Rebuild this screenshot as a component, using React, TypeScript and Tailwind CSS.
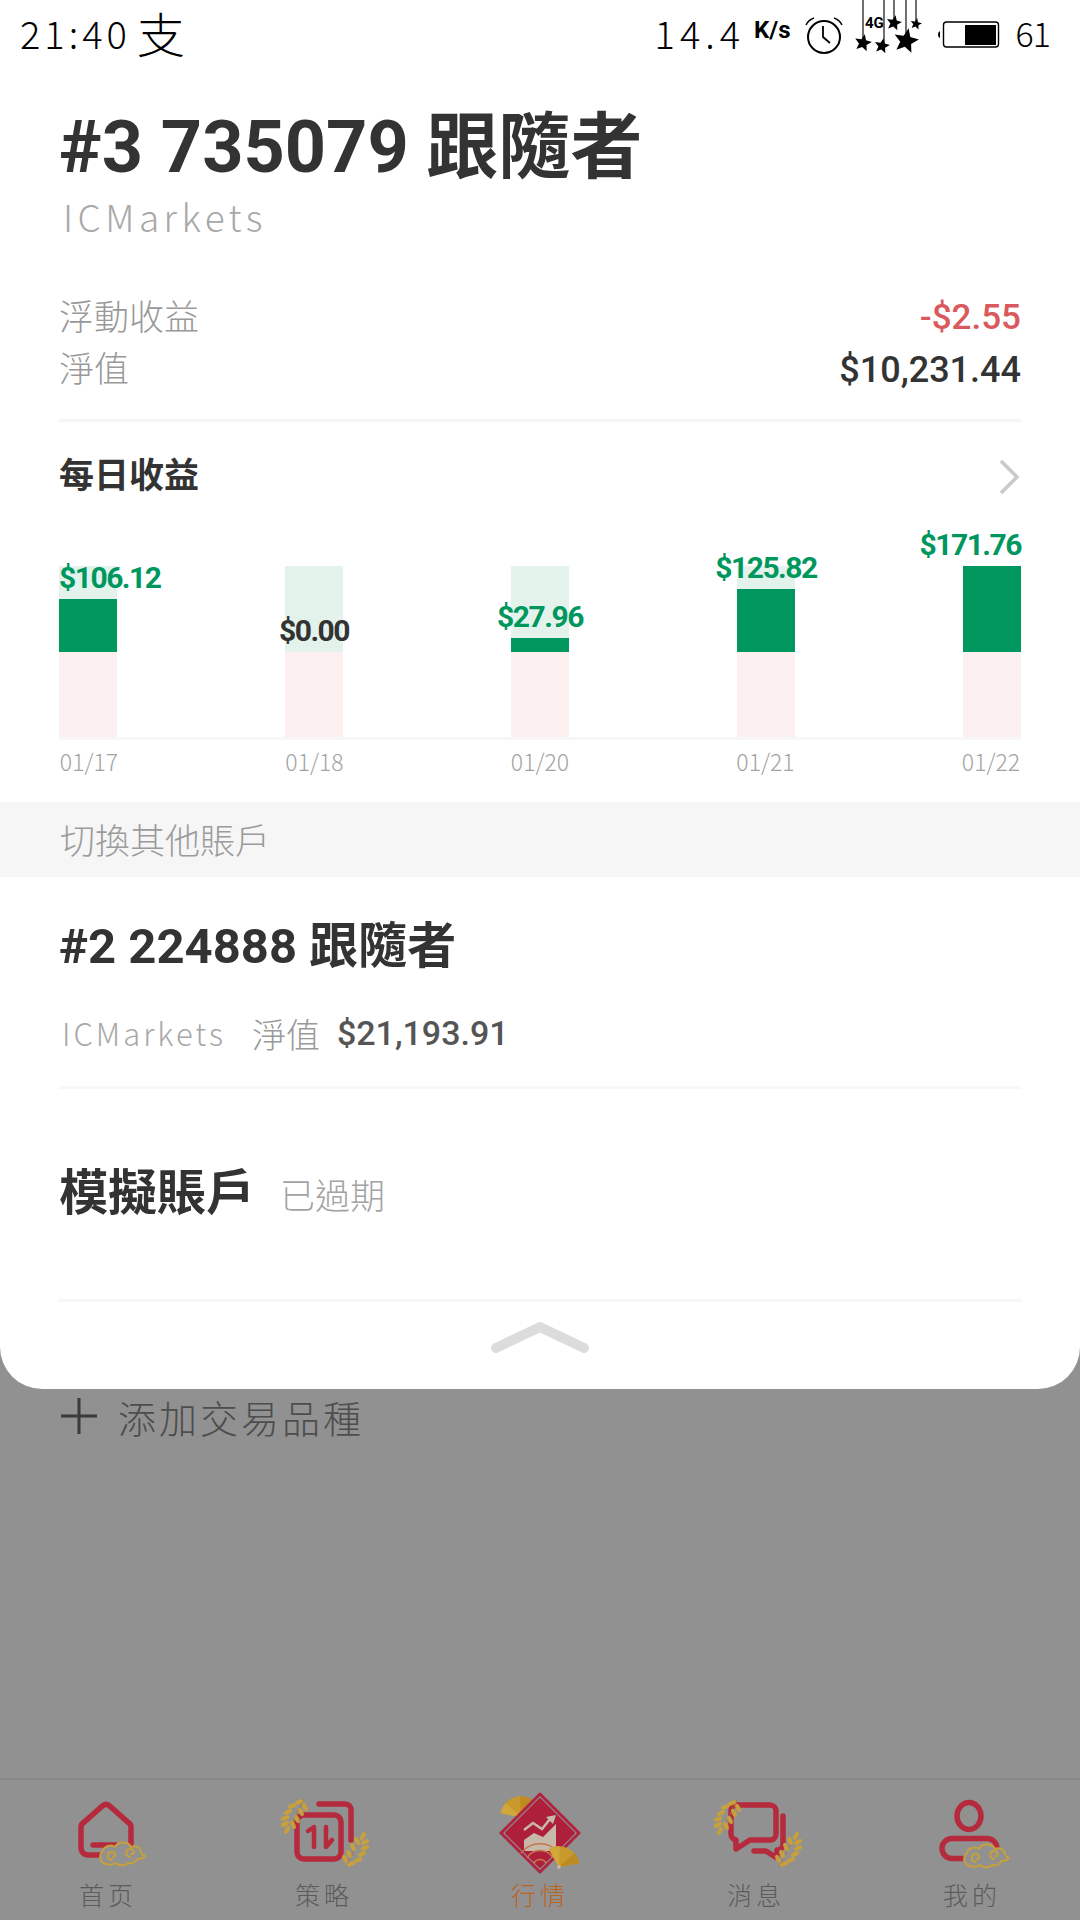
import React from "react";

const RED = "#b62a3d";
const GOLD = "#c6a03c";
const BG = "#919191";

function Cloud({ x, y }: { x: number; y: number }) {
  return (
    <g transform={`translate(${x} ${y})`} fill={BG} stroke={GOLD} strokeWidth="2" strokeLinecap="round" strokeLinejoin="round">
      <path d="M8 22 C1 22 -1 13 4 9 C5 4 12 2 16 5 C19 -1 29 -1 32 5 C36 3 41 5 42 10 C43 13 45 14 46 14 L44 16 C42 17 40 17 38 17 C37 21 32 22 29 21 C26 24 20 24 17 21 C14 23 11 23 8 22 Z" />
      <path fill="none" d="M13 18 C8 18 7 11 12 10 C16 9 18 15 14 15 M31 15 C26 14 26 7 31 7 C36 7 36 13 32 12" />
    </g>
  );
}

function Sprig({ x, y, flip }: { x: number; y: number; flip?: boolean }) {
  const grains: [number, number, number][] = [
    [15, 1, -20], [8, 5, -20], [21, 6, 65], [4, 11, -25], [17, 11, 65], [1, 17, -20], [13, 18, 65], [1, 23, -30], [9, 24, 65], [3, 29, -60],
  ];
  return (
    <g transform={`translate(${x} ${y})${flip ? " rotate(180 11 16)" : ""}`}>
      <path d="M20 -2 L7 24" stroke="#b06a3a" strokeWidth="0.8" />
      {grains.map(([gx, gy, r], i) => (
        <ellipse key={i} cx={gx} cy={gy} rx="4.500" ry="2.200" fill={GOLD} transform={`rotate(${r} ${gx} ${gy})`} />
      ))}
    </g>
  );
}

function HomeIcon() {
  return (
    <svg width="100" height="90" viewBox="0 0 100 90">
      <path d="M44 65 H30 A7 7 0 0 1 23 58 V37 A5 5 0 0 1 25 33 L45 15.500 A5 5 0 0 1 51 15.500 L71 33 A5 5 0 0 1 73 37 V56" fill="none" stroke={RED} strokeWidth="5.500" strokeLinecap="round" />
      <path d="M35 55 H58" stroke={RED} strokeWidth="5.500" strokeLinecap="round" />
      <Cloud x={41} y={52} />
    </svg>
  );
}

function StrategyIcon() {
  return (
    <svg width="100" height="90" viewBox="0 0 100 90">
      <path d="M45 14 H71 A6 6 0 0 1 77 20 V50" fill="none" stroke={RED} strokeWidth="5.500" strokeLinecap="round" />
      <rect x="23" y="25" width="44" height="44" rx="7" fill="none" stroke={RED} strokeWidth="5.500" />
      <path d="M34 41 L40 37 V57 M52 37 V57 L58 50" fill="none" stroke={RED} strokeWidth="4.500" strokeLinecap="round" strokeLinejoin="round" />
      <Sprig x={10} y={11} />
      <Sprig x={70} y={43} flip />
    </svg>
  );
}

function Fan({ x, y, r }: { x: number; y: number; r: number }) {
  return (
    <g transform={`translate(${x} ${y}) rotate(${r})`}>
      <path d="M0 0 L-17 -12 A21 21 0 0 1 17 -12 Z" fill="#c99a2b" />
      <path d="M0 0 L-17 -12 A21 21 0 0 1 -8 -19 Z" fill="#d2a73b" />
      <path d="M0 0 L8 -19 A21 21 0 0 1 17 -12 Z" fill="#bd8a24" />
      <circle r="1.800" fill="#c9b9a5" />
    </g>
  );
}

function MarketIcon() {
  return (
    <svg width="100" height="90" viewBox="0 0 100 90">
      <Fan x={31} y={27} r={-25} />
      <path d="M50 4 L89 43 L50 82 L11 43 Z" fill={BG} stroke="#b0233f" strokeWidth="3" strokeLinejoin="round" />
      <path d="M50 9 L84 43 L50 77 L16 43 Z" fill="#ae1f3b" stroke="#ae1f3b" strokeWidth="2" strokeLinejoin="round" />
      <path d="M34 50 L44 43 L53 47 L66 34 V59 A2 2 0 0 1 64 61 H36 A2 2 0 0 1 34 59 Z" fill="#c7b9aa" />
      <path d="M34 40 L43 33 L52 39 L60 29" fill="none" stroke="#c7b9aa" strokeWidth="2.500" />
      <path d="M56 27 L66 25 L63 34 Z" fill="#c7b9aa" />
      <path d="M31 63 A24 24 0 0 1 69 63 M37 68 A15 15 0 0 1 63 68 M44 73 A7 7 0 0 1 56 73" fill="none" stroke="#c9754a" strokeWidth="1.500" />
      <Fan x={69} y={77} r={25} />
    </svg>
  );
}

function MessageIcon() {
  return (
    <svg width="100" height="90" viewBox="0 0 100 90">
      <path d="M31 15 H64 A6 6 0 0 1 70 21 V44 A6 6 0 0 1 64 50 H44 L30 59 V50 A6 6 0 0 1 25 44 V21 A6 6 0 0 1 31 15 Z" fill="none" stroke={RED} strokeWidth="5.500" strokeLinejoin="round" />
      <path d="M77 26 V55 A6 6 0 0 1 71 60 V68 L60 61 H48" fill="none" stroke={RED} strokeWidth="5.500" strokeLinecap="round" strokeLinejoin="round" />
      <Sprig x={11} y={12} />
      <Sprig x={71} y={43} flip />
    </svg>
  );
}

function MeIcon() {
  return (
    <svg width="100" height="90" viewBox="0 0 100 90">
      <ellipse cx="47" cy="26" rx="12" ry="13.500" fill="none" stroke={RED} strokeWidth="5.500" />
      <rect x="20" y="48.500" width="55" height="20" rx="10" fill="none" stroke={RED} strokeWidth="5.500" />
      <Cloud x={41} y={54} />
    </svg>
  );
}

function star(cx: number, cy: number, r: number) {
  const pts: string[] = [];
  for (let i = 0; i < 10; i++) {
    const a = (Math.PI / 5) * i - Math.PI / 2 + 0.2;
    const rad = i % 2 ? r * 0.45 : r;
    pts.push(`${(cx + rad * Math.cos(a)).toFixed(1)},${(cy + rad * Math.sin(a)).toFixed(1)}`);
  }
  return pts.join(" ");
}

function Alarm() {
  return (
    <svg width="40" height="44" viewBox="0 0 40 44" className="shrink-0">
      <circle cx="20" cy="24" r="16" fill="none" stroke="#000" strokeWidth="2" />
      <path d="M19 13 V24 L26 30" fill="none" stroke="#000" strokeWidth="1.800" />
      <path d="M2 12 C4 8 7 6 10 5 M38 12 C36 8 33 6 30 5" fill="none" stroke="#000" strokeWidth="1.500" />
    </svg>
  );
}

function Stars() {
  return (
    <svg width="72" height="56" viewBox="0 0 72 56" className="shrink-0">
      <g stroke="#111" strokeWidth="1.200">
        <path d="M8 0 V42 M29 0 V44 M39 0 V20 M51 0 V34 M61 0 V22" />
      </g>
      <g fill="#000">
        <polygon points={star(8, 43, 9)} />
        <polygon points={star(27, 46, 8)} />
        <polygon points={star(51, 41, 13)} />
        <polygon points={star(39, 23, 8)} />
        <polygon points={star(61, 24, 6)} />
      </g>
      <text x="10" y="28" fontFamily="Roboto" fontWeight="700" fontSize="15" fill="#000">4G</text>
    </svg>
  );
}

function Battery() {
  return (
    <svg width="64" height="28" viewBox="0 0 64 28" className="shrink-0">
      <path d="M3 10 A4 4 0 0 0 3 17 Z" fill="#000" />
      <rect x="6.500" y="1" width="55" height="25" rx="3" fill="#fff" stroke="#000" strokeWidth="1.400" />
      <rect x="28" y="4" width="31" height="20" fill="#000" />
    </svg>
  );
}

const HAND = "font-['Noto_Sans_CJK_TC',sans-serif] font-extralight";
const NUM = "font-['Roboto','Noto_Sans_CJK_TC',sans-serif]";

const bars = [
  { label: "$106.12", date: "01/17", h: 53, color: "text-[#00975f]", pos: "left-0" },
  { label: "$0.00", date: "01/18", h: 0, color: "text-[#333333]", pos: "left-1/2 -translate-x-1/2" },
  { label: "$27.96", date: "01/20", h: 14, color: "text-[#00975f]", pos: "left-1/2 -translate-x-1/2" },
  { label: "$125.82", date: "01/21", h: 63, color: "text-[#00975f]", pos: "left-1/2 -translate-x-1/2" },
  { label: "$171.76", date: "01/22", h: 86, color: "text-[#00975f]", pos: "right-0" },
];

const tabs = [
  { label: "首页", icon: <HomeIcon />, color: "text-[#5b5b5b]" },
  { label: "策略", icon: <StrategyIcon />, color: "text-[#5b5b5b]" },
  { label: "行情", icon: <MarketIcon />, color: "text-[#b9641f]" },
  { label: "消息", icon: <MessageIcon />, color: "text-[#5b5b5b]" },
  { label: "我的", icon: <MeIcon />, color: "text-[#5b5b5b]" },
];

export default function App() {
  return (
    <div className="w-[1080px] h-[1920px] flex flex-col bg-[#919191] overflow-hidden">
      <div className="h-[1389px] shrink-0 bg-white rounded-b-[42px] flex flex-col">
        {/* status bar */}
        <div className={`h-[70px] shrink-0 flex items-center pl-[20px] pr-[30px] text-black text-[38px] ${HAND}`}>
          <span className="mb-[6px] tracking-[4px]">21:40</span>
          <span className="mb-[6px] ml-[6px] text-[48px] leading-none">支</span>
          <span className="ml-auto mb-[6px] tracking-[5px]">14.4</span>
          <span className="ml-[9px] mb-[10px] text-[24px] font-bold font-['Roboto',sans-serif]">K/s</span>
          <span className="ml-[13px] flex items-center"><Alarm /></span>
          <span className="ml-[11px] mb-[14px] flex items-center"><Stars /></span>
          <span className="ml-[10px] flex items-center"><Battery /></span>
          <span className="ml-[15px] mb-[6px] text-[34px] tracking-[-1px]">61</span>
        </div>

        <div className="px-[59px] flex flex-col">
          <h1 className={`mt-[32px] text-[72px] leading-[92px] font-bold text-[#333333] whitespace-nowrap ${NUM}`}>#3 735079 跟隨者</h1>
          <div className={`-mt-[2px] ml-[4px] text-[37px] leading-[48px] tracking-[4.5px] text-[#a8a8a8] ${HAND}`}>ICMarkets</div>

          <div className="mt-[49px] flex justify-between items-center h-[52px]">
            <span className={`text-[35px] text-[#999999] ${HAND}`}>浮動收益</span>
            <span className={`pt-[6px] text-[35px] font-medium text-[#d9595c] ${NUM}`}>-$2.55</span>
          </div>
          <div className="flex justify-between items-center h-[52px]">
            <span className={`text-[35px] text-[#999999] ${HAND}`}>淨值</span>
            <span className={`pt-[6px] text-[36px] font-medium text-[#333333] ${NUM}`}>$10,231.44</span>
          </div>

          <div className="mt-[26px] h-[3px] bg-[#f5f5f5]" />

          <div className="mt-[31px] flex justify-between items-center h-[48px]">
            <span className={`text-[35px] font-bold text-[#333333] ${NUM}`}>每日收益</span>
            <svg width="24" height="38" viewBox="0 0 24 38">
              <path d="M4 3 L20 19 L4 35" fill="none" stroke="#c9c9c9" strokeWidth="3.500" />
            </svg>
          </div>

          {/* chart */}
          <div className="mt-[65px] flex justify-between">
            {bars.map((b) => (
              <div key={b.date} className="w-[58px] flex flex-col">
                <div className="h-[86px] bg-[#e3f3ec] flex flex-col justify-end">
                  <div className="relative bg-[#00975f]" style={{ height: b.h }}>
                    <span className={`absolute bottom-full mb-[4px] whitespace-nowrap text-[30px] leading-[34px] tracking-[-1.500px] font-bold ${b.color} ${b.pos} ${NUM}`}>{b.label}</span>
                  </div>
                </div>
                <div className="h-[85px] bg-[#fcefef]" />
              </div>
            ))}
          </div>
          <div className="h-[3px] bg-[#f7f7f7]" />
          <div className="mt-[5px] flex justify-between">
            {bars.map((b) => (
              <span key={b.date} className={`w-[60px] text-center text-[23px] leading-[32px] text-[#a3a3a3] ${HAND}`}>{b.date}</span>
            ))}
          </div>
        </div>

        <div className={`mt-[25px] h-[75px] shrink-0 bg-[#f6f6f6] flex items-center px-[60px] text-[35px] text-[#9b9b9b] ${HAND}`}>
          切換其他賬戶
        </div>

        <div className="px-[59px] flex flex-col">
          <div className={`mt-[38px] text-[49px] leading-[64px] font-bold text-[#333333] whitespace-nowrap ${NUM}`}>#2 224888 跟隨者</div>
          <div className="mt-[30px] flex items-center h-[48px]">
            <span className={`text-[31px] tracking-[3px] text-[#a8a8a8] ml-[3px] ${HAND}`}>ICMarkets</span>
            <span className={`ml-[26px] text-[34px] text-[#999999] ${HAND}`}>淨值</span>
            <span className={`ml-[17px] text-[34px] font-medium text-[#555555] ${NUM}`}>$21,193.91</span>
          </div>
          <div className="mt-[29px] h-[3px] bg-[#f7f7f7]" />
          <div className="h-[210px] flex items-center">
            <span className={`text-[49px] font-bold text-[#333333] ${NUM}`}>模擬賬戶</span>
            <span className={`ml-[25px] text-[35px] text-[#a3a3a3] ${HAND}`}>已過期</span>
          </div>
          <div className="h-[3px] bg-[#f7f7f7]" />
          <div className="mt-[20px] flex justify-center">
            <svg width="100" height="32" viewBox="0 0 100 32">
              <path d="M6 26 L50 5 L94 26" fill="none" stroke="#dcdcdc" strokeWidth="10" strokeLinecap="round" strokeLinejoin="round" />
            </svg>
          </div>
        </div>
      </div>

      {/* dimmed page behind */}
      <div className="px-[59px] mt-[1px] flex items-center h-[52px]">
        <svg width="40" height="40" viewBox="0 0 40 40">
          <path d="M2 20 H38 M20 2 V38" stroke="#3a3a3a" strokeWidth="3" />
        </svg>
        <span className={`ml-[19px] text-[38px] tracking-[3px] text-[#4d4d4d] ${HAND}`}>添加交易品種</span>
      </div>

      <div className="mt-auto h-[142px] border-t-2 border-[#868686] pt-[10px] grid grid-cols-5">
        {tabs.map((t) => (
          <div key={t.label} className="flex flex-col items-center">
            {t.icon}
            <span className={`-mt-[4px] text-[25px] leading-[36px] tracking-[4px] ${t.color} ${HAND}`}>{t.label}</span>
          </div>
        ))}
      </div>
    </div>
  );
}
